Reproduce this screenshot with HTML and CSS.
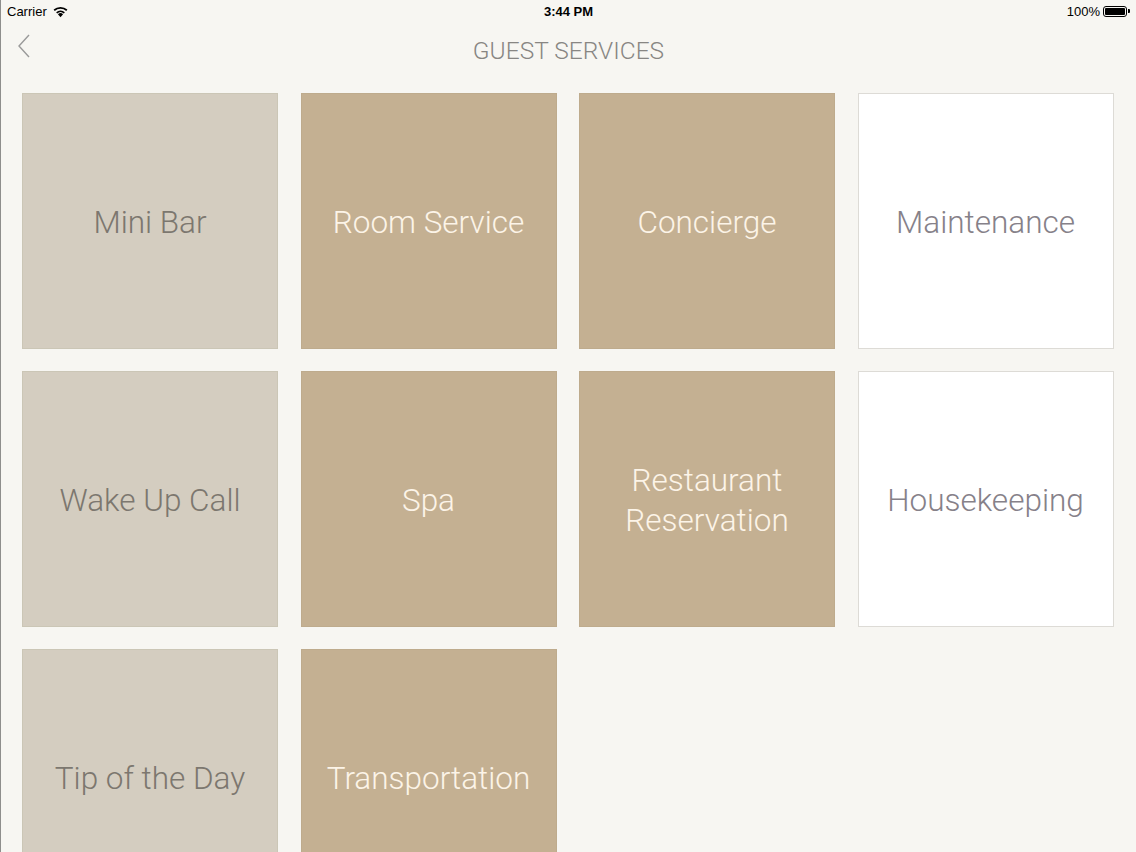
FILE: index.html
```html
<!DOCTYPE html>
<html>
    <head>
        <meta charset="utf-8">
        <link rel="stylesheet" href="styles.css">
    </head>
<body>
    <div class="status-bar">
        <div class="status-left">
            Carrier
            <svg class="wifi" width="17" height="13" viewBox="0 0 16 12">
                <path d="M8 11.5 L10.4 8.6 A3.6 3.6 0 0 0 5.6 8.6 Z" fill="#000"/>
                <path d="M3.9 6.6 A6.2 6.2 0 0 1 12.1 6.6 L11.1 7.8 A4.6 4.6 0 0 0 4.9 7.8 Z" fill="#000"/>
                <path d="M1.5 4.2 A9.6 9.6 0 0 1 14.5 4.2 L13.4 5.5 A7.9 7.9 0 0 0 2.6 5.5 Z" fill="#000"/>
            </svg>
        </div>
        <div class="status-time">3:44 PM</div>
        <div class="status-right">
            100%
            <div class="battery"><div class="battery-fill"></div></div>
            <div class="battery-tip"></div>
        </div>
    </div>
    <div class="nav-bar">
        <svg class="back" width="14" height="24" viewBox="0 0 14 24">
            <path d="M12 1 L2 12 L12 23" fill="none" stroke="#9a9a9a" stroke-width="1.4"/>
        </svg>
        <div class="nav-title">GUEST SERVICES</div>
    </div>
    <div class="grid">
        <div class="tile light">Mini Bar</div>
        <div class="tile tan">Room Service</div>
        <div class="tile tan">Concierge</div>
        <div class="tile white">Maintenance</div>
        <div class="tile light">Wake Up Call</div>
        <div class="tile tan">Spa</div>
        <div class="tile tan">Restaurant<br>Reservation</div>
        <div class="tile white">Housekeeping</div>
        <div class="tile light">Tip of the Day</div>
        <div class="tile tan">Transportation</div>
    </div>
</body>
</html>
```

FILE: styles.css
```css
* {
    padding: 0;
    margin: 0;
    box-sizing: border-box;
}
html, body {
    height: 100%;
    overflow: hidden;
}
body {
    background-color: #f7f6f2;
    border-left: 1px solid #8e8e8c;
    font-family: Roboto, "Liberation Sans", sans-serif;
}
.status-bar {
    height: 22px;
    display: flex;
    align-items: center;
    justify-content: space-between;
    padding: 0 6px 0 6px;
    font-family: "Liberation Sans", Arial, sans-serif;
    font-size: 13px;
    color: #000;
    position: relative;
}
.status-left {
    display: flex;
    align-items: center;
    gap: 5px;
}
.status-time {
    position: absolute;
    left: 0;
    right: 0;
    text-align: center;
    font-weight: bold;
    pointer-events: none;
}
.status-right {
    display: flex;
    align-items: center;
}
.battery {
    width: 24px;
    height: 11px;
    border: 1px solid #000;
    border-radius: 3px;
    padding: 1px;
    margin-left: 3px;
}
.battery-fill {
    width: 100%;
    height: 100%;
    background: #000;
    border-radius: 1px;
}
.battery-tip {
    width: 2px;
    height: 4px;
    background: #000;
    border-radius: 0 1px 1px 0;
    margin-left: 1px;
}
.nav-bar {
    height: 57px;
    display: flex;
    align-items: center;
    justify-content: center;
    position: relative;
}
.back {
    position: absolute;
    left: 16px;
    top: 12px;
}
.nav-title {
    font-size: 24.5px;
    font-weight: 300;
    color: #888683;
}
.grid {
    display: grid;
    grid-template-columns: repeat(4, 256px);
    grid-auto-rows: 256px;
    column-gap: 22.5px;
    row-gap: 22px;
    padding: 14px 0 0 21px;
}
.tile {
    display: flex;
    align-items: center;
    justify-content: center;
    text-align: center;
    font-size: 31.5px;
    font-weight: 300;
    line-height: 40px;
    padding-top: 4px;
    border: 1px solid transparent;
}
.light {
    background-color: #d4cdc0;
    border-color: #cbc6b6;
    color: #7c776f;
}
.tan {
    background-color: #c4b092;
    border-color: #beab8d;
    color: #fcf4e8;
}
.white {
    background-color: #ffffff;
    border-color: #dddbd6;
    color: #868189;
}
```
